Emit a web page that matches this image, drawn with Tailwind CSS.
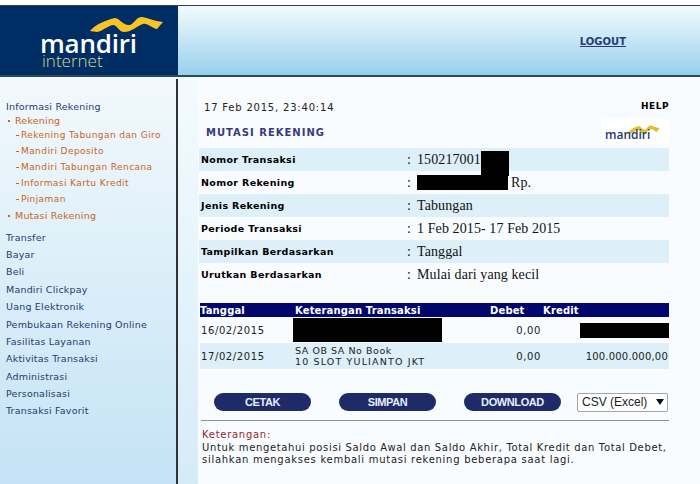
<!DOCTYPE html>
<html>
<head>
<meta charset="utf-8">
<script src="https://cdn.jsdelivr.net/npm/@tailwindcss/browser@4"></script>
</head>
<body class="w-[700px] h-[484px] overflow-hidden bg-white font-['DejaVu_Sans',sans-serif]">
<div class="h-[5px] bg-white"></div>
<header class="flex h-[72px] border-t border-[#33424c] border-b-2 border-b-[#2a4a5c]">
  <div class="relative w-[178px] bg-[#002d63] shrink-0">
    <svg class="absolute left-[88px] top-[10px]" width="76" height="17" viewBox="0 0 76 17"><path d="M2 15 C8 8 18 4 27 2 C33 3 35 10 42 9 C46 8 48 1 54 1 C60 2 66 5 75 6 L69 13 C63 12 60 7 55 8 C50 9 44 16 36 16 C31 16 29 9 25 9 C19 10 15 15 9 16 Z" fill="#f7c325"/></svg>
    <div class="absolute left-[40px] top-[26px] font-['Open_Sans'] font-semibold text-[26px] leading-[22px] tracking-[-0.2px] text-white">mandiri</div>
    <div class="absolute left-[42px] top-[48px] font-['Open_Sans'] font-light text-[17px] leading-[14px] text-[#d3dc95]">internet</div>
  </div>
  <div class="flex-1 bg-gradient-to-b from-[#f2fafe] to-[#97d0ec] flex justify-end pr-[74px] pt-[29px]">
    <a class="text-[10px] leading-[13px] h-[14px] font-bold underline text-[#2a3a78]">LOGOUT</a>
  </div>
</header>
<div class="flex h-[407px]">
  <aside class="w-[178px] shrink-0 h-full flex">
    <nav class="w-[176px] bg-gradient-to-b from-[#f2f9fc] to-[#c4e3f5] pl-[6px] pt-[23px] text-[9.5px] leading-[13px] tracking-[0.2px] text-[#263a70]">
      <div class="h-[13px]">Informasi Rekening</div>
      <div class="h-[15px] flex items-start pt-[1px] text-[#c8651b]"><span class="w-[9px] h-[13px] flex items-center pl-[2px] shrink-0"><span class="w-[2px] h-[2px] bg-[#c8651b]"></span></span>Rekening</div>
      <div class="text-[#c8651b] tracking-[0.42px] text-[9px]">
        <div class="h-[16px] flex items-start pt-[1px]"><span class="w-[15px] h-[13px] flex items-center pl-[10px] shrink-0"><span class="w-[3px] h-px bg-[#c8651b]"></span></span>Rekening Tabungan dan Giro</div>
        <div class="h-[16px] flex items-start pt-[1px]"><span class="w-[15px] h-[13px] flex items-center pl-[10px] shrink-0"><span class="w-[3px] h-px bg-[#c8651b]"></span></span>Mandiri Deposito</div>
        <div class="h-[16px] flex items-start pt-[1px]"><span class="w-[15px] h-[13px] flex items-center pl-[10px] shrink-0"><span class="w-[3px] h-px bg-[#c8651b]"></span></span>Mandiri Tabungan Rencana</div>
        <div class="h-[16px] flex items-start pt-[1px]"><span class="w-[15px] h-[13px] flex items-center pl-[10px] shrink-0"><span class="w-[3px] h-px bg-[#c8651b]"></span></span>Informasi Kartu Kredit</div>
        <div class="h-[16px] flex items-start pt-[1px]"><span class="w-[15px] h-[13px] flex items-center pl-[10px] shrink-0"><span class="w-[3px] h-px bg-[#c8651b]"></span></span>Pinjaman</div>
      </div>
      <div class="h-[23px] flex items-start pt-[1px] text-[#c8651b]"><span class="w-[9px] h-[13px] flex items-center pl-[2px] shrink-0"><span class="w-[2px] h-[2px] bg-[#c8651b]"></span></span>Mutasi Rekening</div>
      <div class="h-[17px]">Transfer</div>
      <div class="h-[17px]">Bayar</div>
      <div class="h-[18px]">Beli</div>
      <div class="h-[17px]">Mandiri Clickpay</div>
      <div class="h-[18px]">Uang Elektronik</div>
      <div class="h-[17px]">Pembukaan Rekening Online</div>
      <div class="h-[17px]">Fasilitas Layanan</div>
      <div class="h-[18px]">Aktivitas Transaksi</div>
      <div class="h-[17px]">Administrasi</div>
      <div class="h-[17px]">Personalisasi</div>
      <div class="h-[17px]">Transaksi Favorit</div>
    </nav>
    <div class="w-[2px] bg-[#333] mt-[2px]"></div>
  </aside>
  <div class="w-[20px] shrink-0 bg-gradient-to-b from-[#f4fbfe] to-[#d4ecf8]"></div>
  <main class="flex-1 bg-[#f8fcff] pl-[1px] pr-[31px] text-[10px] text-[#222]">
    <div class="flex justify-between h-[39px] pt-[24px] pl-[5px] leading-[13px] tracking-[0.8px]">
      <span class="text-[#222]">17 Feb 2015, 23:40:14</span>
      <span class="font-bold text-[9px] text-black tracking-[0.5px] -mt-[1px]">HELP</span>
    </div>
    <div class="flex justify-between h-[32px] pl-[7px] pt-[10px]">
      <span class="font-bold text-[#37397c] leading-[13px] tracking-[1px]">MUTASI REKENING</span>
      <div class="relative w-[68px] h-[25px] -mt-[7px] bg-white">
        <svg class="absolute left-[26px] top-[6px]" width="33" height="9" viewBox="0 0 76 17" preserveAspectRatio="none"><path d="M2 15 C8 8 18 4 27 2 C33 3 35 10 42 9 C46 8 48 1 54 1 C60 2 66 5 75 6 L69 13 C63 12 60 7 55 8 C50 9 44 16 36 16 C31 16 29 9 25 9 C19 10 15 15 9 16 Z" fill="#e2bd2f"/></svg>
        <span class="absolute left-[4px] top-[8px] font-['Open_Sans'] font-semibold text-[12px] leading-[16px] text-[#1f3a74]">mandiri</span>
      </div>
    </div>
    <div class="font-['Liberation_Serif',serif] text-[14px] leading-[16px] tracking-[0.1px] text-[#111]">
      <div class="h-[23px] bg-[#ddeff8] flex items-center"><b class="w-[208px] pl-[2px] font-['DejaVu_Sans'] text-[9.5px] tracking-[0.35px] text-black">Nomor Transaksi</b><span class="w-[10px]">:</span><span>150217001</span><span class="w-[28px] h-[25px] bg-black relative top-[4px]"></span></div>
      <div class="h-[23px] flex items-center"><b class="w-[208px] pl-[2px] font-['DejaVu_Sans'] text-[9.5px] tracking-[0.35px] text-black">Nomor Rekening</b><span class="w-[10px]">:</span><span class="w-[91px] h-[15px] bg-black mr-[3px]"></span><span>Rp.</span></div>
      <div class="h-[23px] bg-[#ddeff8] flex items-center"><b class="w-[208px] pl-[2px] font-['DejaVu_Sans'] text-[9.5px] tracking-[0.35px] text-black">Jenis Rekening</b><span class="w-[10px]">:</span><span>Tabungan</span></div>
      <div class="h-[23px] flex items-center"><b class="w-[208px] pl-[2px] font-['DejaVu_Sans'] text-[9.5px] tracking-[0.35px] text-black">Periode Transaksi</b><span class="w-[10px]">:</span><span>1 Feb 2015- 17 Feb 2015</span></div>
      <div class="h-[23px] bg-[#ddeff8] flex items-center"><b class="w-[208px] pl-[2px] font-['DejaVu_Sans'] text-[9.5px] tracking-[0.35px] text-black">Tampilkan Berdasarkan</b><span class="w-[10px]">:</span><span>Tanggal</span></div>
      <div class="h-[23px] flex items-center"><b class="w-[208px] pl-[2px] font-['DejaVu_Sans'] text-[9.5px] tracking-[0.35px] text-black">Urutkan Berdasarkan</b><span class="w-[10px]">:</span><span>Mulai dari yang kecil</span></div>
    </div>
    <div class="mt-[17px] ml-[1px] tracking-[0.6px]">
      <div class="h-[14px] bg-[#00066b] text-white font-bold flex items-center pt-[1px] leading-[12px] tracking-[0.15px]">
        <span class="w-[95px]">Tanggal</span><span class="w-[195px]">Keterangan Transaksi</span><span class="w-[53px]">Debet</span><span>Kredit</span>
      </div>
      <div class="h-[26px] flex items-center">
        <span class="w-[93px] pl-[1px]">16/02/2015</span><span class="w-[149px] h-[24px] bg-black"></span><span class="w-[99px] text-right">0,00</span><span class="w-[39px]"></span><span class="w-[89px] h-[15px] bg-black"></span>
      </div>
      <div class="h-[26px] bg-[#ddeff8] flex items-center">
        <span class="w-[95px] pl-[1px]">17/02/2015</span><span class="w-[147px] text-[9.5px] leading-[11px] whitespace-nowrap"><span class="block tracking-[0.55px]">SA OB SA No Book</span><span class="block tracking-[1.15px]">10 SLOT YULIANTO JKT</span></span><span class="w-[99px] text-right">0,00</span><span class="flex-1 text-right pr-[1px] tracking-[0.2px]">100.000.000,00</span>
      </div>
    </div>
    <div class="flex items-center h-[18px] mt-[24px] font-['Liberation_Sans'] font-bold text-[11px] tracking-[-0.4px] text-[#e8eef8]">
      <span class="ml-[15px] w-[97px] h-[18px] rounded-full bg-[#1f2b69] flex items-center justify-center">CETAK</span>
      <span class="ml-[28px] w-[97px] h-[18px] rounded-full bg-[#1f2b69] flex items-center justify-center">SIMPAN</span>
      <span class="ml-[28px] w-[97px] h-[18px] rounded-full bg-[#1f2b69] flex items-center justify-center">DOWNLOAD</span>
      <span class="ml-[16px] w-[91px] h-[19px] border border-[#a5a5a5] rounded-[2px] bg-white flex items-center justify-between pl-[4px] pr-[3px] font-normal text-[12px] tracking-normal text-[#222]">CSV (Excel)<svg width="8" height="6" viewBox="0 0 8 6"><path d="M0 0h8L4 6z" fill="#111"/></svg></span>
    </div>
    <div class="mt-[9px] border-t border-[#8a8f92] ml-[2px]"></div>
    <div class="pl-[3px] pt-[8px] leading-[12.5px] tracking-[0.65px] text-[#222] whitespace-nowrap">
      <div class="text-[#9c1c2b] tracking-[0.72px]">Keterangan:</div>
      <div>Untuk mengetahui posisi Saldo Awal dan Saldo Akhir, Total Kredit dan Total Debet,</div>
      <div class="tracking-[0.72px]">silahkan mengakses kembali mutasi rekening beberapa saat lagi.</div>
    </div>
  </main>
</div>
</body>
</html>
